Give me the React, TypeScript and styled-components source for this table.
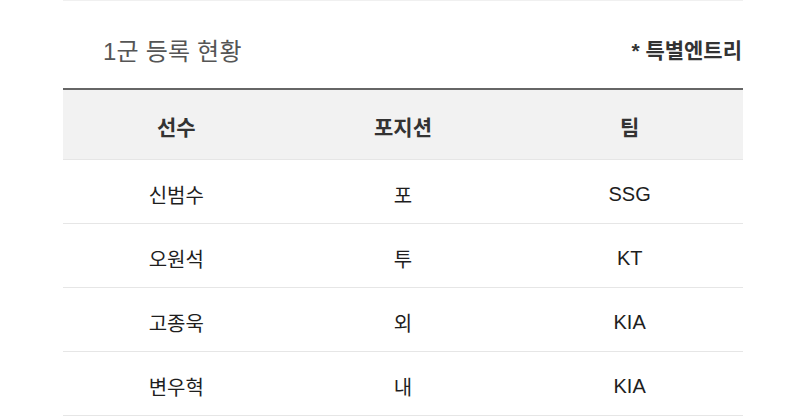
import React from "react";
import styled, { createGlobalStyle } from "styled-components";

const GlobalStyle = createGlobalStyle`
  html, body {
    margin: 0;
    padding: 0;
    background: #ffffff;
    font-family: "Liberation Sans", "Noto Sans CJK KR", sans-serif;
  }
`;

const Page = styled.div`
  width: 800px;
  height: 418px;
  overflow: hidden;
  background: #fff;
`;

const Section = styled.section`
  width: 680px;
  margin-left: 63px;
  border-top: 1px solid #f0f0f0;
`;

const TitleRow = styled.div`
  display: flex;
  align-items: center;
  justify-content: space-between;
  height: 87px;
  padding: 9px 1px 0 40px;
  box-sizing: border-box;
`;

const Title = styled.h2`
  margin: 0;
  font-size: 24px;
  font-weight: 400;
  color: #555;
  letter-spacing: 0.2px;
`;

const Note = styled.span`
  font-size: 21px;
  font-weight: 700;
  color: #333;
`;

const Table = styled.div`
  border-top: 2px solid #666;
`;

const Row = styled.div<{ $head?: boolean }>`
  display: grid;
  grid-template-columns: repeat(3, 1fr);
  align-items: center;
  height: ${(p) => (p.$head ? "69px" : "63px")};
  background: ${(p) => (p.$head ? "#f2f2f2" : "#fff")};
  border-bottom: 1px solid #e6e6e6;
`;

const Cell = styled.div<{ $head?: boolean }>`
  text-align: center;
  padding-top: ${(p) => (p.$head ? "2px" : "5px")};
  font-size: ${(p) => (p.$head ? "21px" : "20px")};
  font-weight: ${(p) => (p.$head ? 700 : 400)};
  color: ${(p) => (p.$head ? "#333" : "#1e1e1e")};
`;

const players = [
  ["신범수", "포", "SSG"],
  ["오원석", "투", "KT"],
  ["고종욱", "외", "KIA"],
  ["변우혁", "내", "KIA"],
];

export default function App() {
  return (
    <Page>
      <GlobalStyle />
      <Section>
        <TitleRow>
          <Title>1군 등록 현황</Title>
          <Note>* 특별엔트리</Note>
        </TitleRow>
        <Table>
          <Row $head>
            <Cell $head>선수</Cell>
            <Cell $head>포지션</Cell>
            <Cell $head>팀</Cell>
          </Row>
          {players.map((p) => (
            <Row key={p[0]}>
              {p.map((c, i) => (
                <Cell key={i}>{c}</Cell>
              ))}
            </Row>
          ))}
        </Table>
      </Section>
    </Page>
  );
}
